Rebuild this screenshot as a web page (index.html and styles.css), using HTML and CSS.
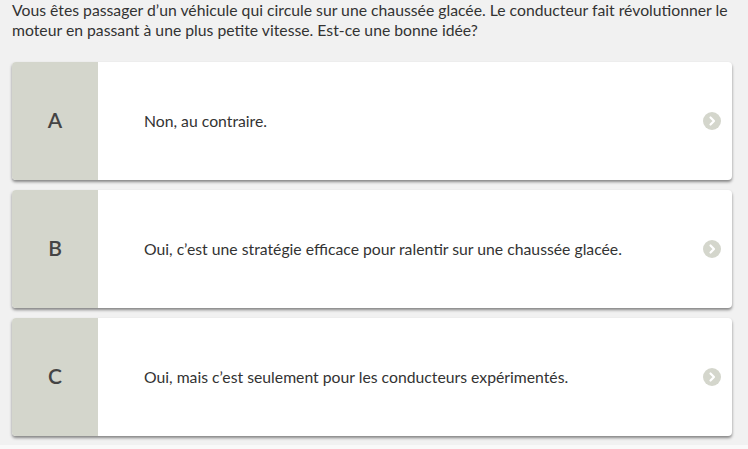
FILE: index.html
```html
<!DOCTYPE html>
<html lang="fr">
<head>
  <meta charset="UTF-8" />
  <meta name="viewport" content="width=device-width, initial-scale=1" />
  <title>Question</title>
  <link rel="stylesheet" href="styles.css">
</head>
<body>
  <div class="quiz">
    <p class="question">Vous êtes passager d’un véhicule qui circule sur une chaussée glacée. Le conducteur fait révolutionner le moteur en passant à une plus petite vitesse. Est-ce une bonne idée?</p>

    <ul class="answers">
      <li class="answer">
        <span class="answer-letter">A</span>
        <span class="answer-text">Non, au contraire.</span>
        <span class="answer-arrow">
          <svg viewBox="0 0 18 18" width="18" height="18"><circle cx="9" cy="9" r="9" fill="#d4d6cc"/><path d="M7.5 5.5 L11 9 L7.5 12.5" fill="none" stroke="#fff" stroke-width="2.2" stroke-linecap="round" stroke-linejoin="round"/></svg>
        </span>
      </li>
      <li class="answer">
        <span class="answer-letter">B</span>
        <span class="answer-text">Oui, c’est une stratégie efficace pour ralentir sur une chaussée glacée.</span>
        <span class="answer-arrow">
          <svg viewBox="0 0 18 18" width="18" height="18"><circle cx="9" cy="9" r="9" fill="#d4d6cc"/><path d="M7.5 5.5 L11 9 L7.5 12.5" fill="none" stroke="#fff" stroke-width="2.2" stroke-linecap="round" stroke-linejoin="round"/></svg>
        </span>
      </li>
      <li class="answer">
        <span class="answer-letter">C</span>
        <span class="answer-text">Oui, mais c’est seulement pour les conducteurs expérimentés.</span>
        <span class="answer-arrow">
          <svg viewBox="0 0 18 18" width="18" height="18"><circle cx="9" cy="9" r="9" fill="#d4d6cc"/><path d="M7.5 5.5 L11 9 L7.5 12.5" fill="none" stroke="#fff" stroke-width="2.2" stroke-linecap="round" stroke-linejoin="round"/></svg>
        </span>
      </li>
    </ul>
  </div>
</body>
</html>
```

FILE: styles.css
```css
* {
  box-sizing: border-box;
}
body, html {
  margin: 0;
  padding: 0;
}
body {
  background-color: #f9f9f9;
  font-family: 'Lato', 'Liberation Sans', sans-serif;
  color: #333;
}
.quiz {
  background-color: #f1f1f1;
  height: 445px;
  padding: 0 16px 0 12px;
}
.question {
  margin: 0 -12px 0 0;
  font-size: 15.75px;
  line-height: 20px;
  color: #333;
}
.answers {
  list-style: none;
  margin: 22px 0 0;
  padding: 0;
  display: flex;
  flex-direction: column;
  gap: 10px;
}
.answer {
  display: flex;
  align-items: center;
  height: 118px;
  background-color: #fff;
  border-radius: 4px;
  overflow: hidden;
  box-shadow: 0 2px 3px rgba(0, 0, 0, 0.45);
  cursor: pointer;
}
.answer-letter {
  flex: 0 0 86px;
  align-self: stretch;
  display: flex;
  align-items: center;
  justify-content: center;
  padding-bottom: 3px;
  background-color: #d4d6cc;
  font-size: 21px;
  font-weight: 600;
  color: #444;
}
.answer-text {
  flex-grow: 1;
  padding-left: 46px;
  padding-bottom: 2px;
  font-size: 15.75px;
  color: #333;
}
.answer-arrow {
  display: flex;
  margin-right: 11px;
}
```
